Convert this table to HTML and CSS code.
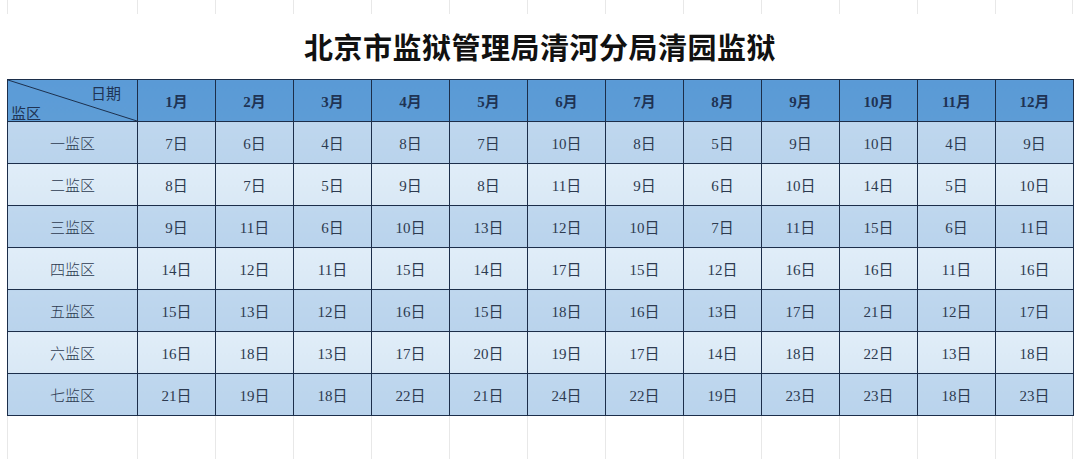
FILE: index.html
```html
<!DOCTYPE html>
<html lang="zh-CN">
<head>
<meta charset="utf-8">
<title>北京市监狱管理局清河分局清园监狱</title>
<link rel="stylesheet" href="styles.css">
</head>
<body>
<div class="sheet">
  <div class="gridstrip top">
    <span></span><span></span><span></span><span></span><span></span><span></span><span></span><span></span><span></span><span></span><span></span><span></span><span></span>
  </div>
  <h1 class="title">北京市监狱管理局清河分局清园监狱</h1>
  <table class="schedule">
    <thead>
      <tr>
        <th class="corner">
          <svg class="diag" viewBox="0 0 130 42" preserveAspectRatio="none"><line x1="0" y1="0" x2="130" y2="42" stroke="#1c2e4a" stroke-width="1"/></svg>
          <span class="c-top">日期</span>
          <span class="c-bot">监区</span>
        </th>
        <th>1月</th><th>2月</th><th>3月</th><th>4月</th><th>5月</th><th>6月</th><th>7月</th><th>8月</th><th>9月</th><th>10月</th><th>11月</th><th>12月</th>
      </tr>
    </thead>
    <tbody>
      <tr class="odd"><td>一监区</td><td>7日</td><td>6日</td><td>4日</td><td>8日</td><td>7日</td><td>10日</td><td>8日</td><td>5日</td><td>9日</td><td>10日</td><td>4日</td><td>9日</td></tr>
      <tr class="even"><td>二监区</td><td>8日</td><td>7日</td><td>5日</td><td>9日</td><td>8日</td><td>11日</td><td>9日</td><td>6日</td><td>10日</td><td>14日</td><td>5日</td><td>10日</td></tr>
      <tr class="odd"><td>三监区</td><td>9日</td><td>11日</td><td>6日</td><td>10日</td><td>13日</td><td>12日</td><td>10日</td><td>7日</td><td>11日</td><td>15日</td><td>6日</td><td>11日</td></tr>
      <tr class="even"><td>四监区</td><td>14日</td><td>12日</td><td>11日</td><td>15日</td><td>14日</td><td>17日</td><td>15日</td><td>12日</td><td>16日</td><td>16日</td><td>11日</td><td>16日</td></tr>
      <tr class="odd"><td>五监区</td><td>15日</td><td>13日</td><td>12日</td><td>16日</td><td>15日</td><td>18日</td><td>16日</td><td>13日</td><td>17日</td><td>21日</td><td>12日</td><td>17日</td></tr>
      <tr class="even"><td>六监区</td><td>16日</td><td>18日</td><td>13日</td><td>17日</td><td>20日</td><td>19日</td><td>17日</td><td>14日</td><td>18日</td><td>22日</td><td>13日</td><td>18日</td></tr>
      <tr class="odd"><td>七监区</td><td>21日</td><td>19日</td><td>18日</td><td>22日</td><td>21日</td><td>24日</td><td>22日</td><td>19日</td><td>23日</td><td>23日</td><td>18日</td><td>23日</td></tr>
    </tbody>
  </table>
  <div class="gridstrip bottom">
    <span></span><span></span><span></span><span></span><span></span><span></span><span></span><span></span><span></span><span></span><span></span><span></span><span></span>
  </div>
</div>
</body>
</html>
```
FILE: styles.css
```css
html, body {
  margin: 0;
  padding: 0;
  background: #ffffff;
}
body {
  width: 1080px;
  height: 459px;
  overflow: hidden;
  font-family: "Liberation Serif", "Noto Sans CJK SC", serif;
  color: #2a3850;
}
.sheet {
  padding-left: 7px;
}
.gridstrip {
  display: grid;
  grid-template-columns: 130px repeat(12, 78px);
  width: 1066px;
}
.gridstrip span {
  border-left: 1px solid #e8e8e8;
}
.gridstrip span:last-child {
  border-right: 1px solid #e8e8e8;
}
.gridstrip.top {
  height: 14px;
}
.gridstrip.bottom {
  height: 44px;
}
.title {
  margin: 0;
  height: 65px;
  width: 1066px;
  box-sizing: border-box;
  padding-top: 14px;
  text-align: center;
  font-family: "Noto Sans CJK SC", sans-serif;
  font-weight: 700;
  font-size: 29px;
  line-height: 36px;
  color: #111111;
  letter-spacing: 0.5px;
}
.schedule {
  border-collapse: collapse;
  table-layout: fixed;
  width: 1067px;
}
.schedule th, .schedule td {
  border: 1px solid #1c2e4a;
  height: 41px;
  padding: 0;
  text-align: center;
  vertical-align: middle;
  font-size: 15px;
}
.schedule th {
  width: 77px;
  background: linear-gradient(to bottom, #5a9ad6, #5d9cd6);
  font-weight: bold;
  color: #1f3354;
}
.schedule th.corner {
  width: 129px;
  position: relative;
  font-weight: normal;
  background: linear-gradient(to bottom, #5b9bd7, #5e9dd6);
}
.diag {
  position: absolute;
  left: 0;
  top: 0;
  width: 100%;
  height: 100%;
}
.c-top {
  position: absolute;
  right: 16px;
  top: 2px;
  color: #1f3354;
  font-family: "Noto Sans CJK SC", sans-serif;
  font-size: 15px;
}
.c-bot {
  position: absolute;
  left: 3px;
  bottom: -2px;
  color: #1f3354;
  font-family: "Noto Sans CJK SC", sans-serif;
  font-size: 15px;
}
.schedule tr.odd td {
  background: linear-gradient(to bottom, #bfd7ee, #b9d3ec);
}
.schedule tr.even td {
  background: linear-gradient(to bottom, #e0edf8, #d9e8f5);
}
.schedule td {
  color: #2d3a50;
}
.schedule td:first-child {
  font-family: "Noto Sans CJK SC", sans-serif;
  font-weight: 300;
  color: #2d3a50;
}
```
